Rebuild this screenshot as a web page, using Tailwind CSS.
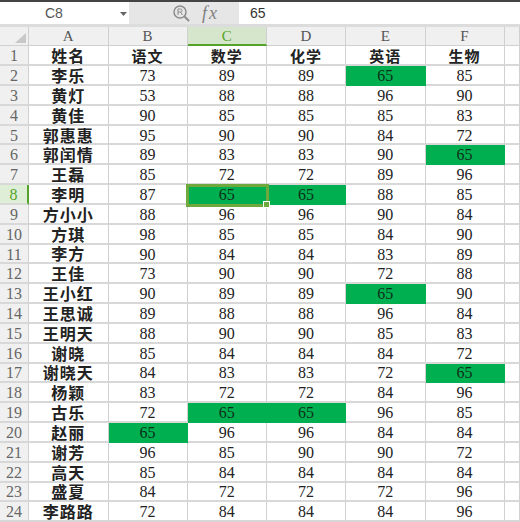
<!DOCTYPE html>
<html lang="zh-CN">
<head>
    <meta charset="UTF-8">
    <title>成绩表</title>
    <script src="https://cdn.jsdelivr.net/npm/@tailwindcss/browser@4"></script>
</head>
<body class="bg-white w-[520px] h-[522px] overflow-hidden font-['Liberation_Serif','Noto_Sans_CJK_SC',serif]">
    <div class="h-[2px] bg-[#444444]"></div>

    <!-- Formula bar -->
    <div class="flex h-[22px]">
        <div class="relative w-[129px] flex items-center bg-white pl-[45px] pt-[1px] text-[14px] text-[#555555] font-['Liberation_Sans',sans-serif]">
            C8
            <svg class="absolute left-[120px] top-[10px]" width="7" height="4" viewBox="0 0 7 4"><path d="M0 0h7L3.5 4z" fill="#666666"/></svg>
        </div>
        <div class="w-[110px] bg-[#e6e6e6] flex items-center pl-[43px] gap-[12px]">
            <svg width="18" height="18" viewBox="0 0 18 18" fill="none" stroke="#8c8c8c">
                <circle cx="8" cy="8" r="6" stroke-width="1.5"/>
                <path d="M12.5 12.5 17 17" stroke-width="2"/>
                <path d="M6 11V5h2.5a1.5 1.5 0 0 1 0 3H6m2.5 0L10.5 11" stroke-width="1"/>
            </svg>
            <span class="text-[18px] italic text-[#808080] tracking-[2px]">fx</span>
        </div>
        <div class="flex-1 flex items-center pl-[11px] pt-[1px] text-[14px] text-[#333333] font-['Liberation_Sans',sans-serif]">65</div>
    </div>
    <div class="h-[3px] bg-[#dcdcdc]"></div>

    <!-- Sheet -->
    <div class="relative">
        <div id="sheet"></div>

        <!-- Selected cell C8 -->
        <div class="absolute left-[186px] top-[157px] w-[83px] h-[23px] border-[3px] border-[#6fa83c]"></div>
        <div class="absolute left-[263px] top-[174px] w-[7px] h-[7px] bg-[#6fa83c] border border-white"></div>
    </div>

    <script>
        const columnCells = ['A', 'B', 'C', 'D', 'E', 'F', ''];
        const rows = [
            ['姓名', '语文', '数学', '化学', '英语', '生物'],
            ['李乐', 73, 89, 89, 65, 85],
            ['黄灯', 53, 88, 88, 96, 90],
            ['黄佳', 90, 85, 85, 85, 83],
            ['郭惠惠', 95, 90, 90, 84, 72],
            ['郭闰情', 89, 83, 83, 90, 65],
            ['王磊', 85, 72, 72, 89, 96],
            ['李明', 87, 65, 65, 88, 85],
            ['方小小', 88, 96, 96, 90, 84],
            ['方琪', 98, 85, 85, 84, 90],
            ['李方', 90, 84, 84, 83, 89],
            ['王佳', 73, 90, 90, 72, 88],
            ['王小红', 90, 89, 89, 65, 90],
            ['王思诚', 89, 88, 88, 96, 84],
            ['王明天', 88, 90, 90, 85, 83],
            ['谢晓', 85, 84, 84, 84, 72],
            ['谢晓天', 84, 83, 83, 72, 65],
            ['杨颖', 83, 72, 72, 84, 96],
            ['古乐', 72, 65, 65, 96, 85],
            ['赵丽', 65, 96, 96, 84, 84],
            ['谢芳', 96, 85, 90, 90, 72],
            ['高天', 85, 84, 84, 84, 84],
            ['盛夏', 84, 72, 72, 72, 96],
            ['李路路', 72, 84, 84, 84, 96]
        ];

        const colWidth = ['w-[79.5px]', 'w-[79px]', 'w-[79.5px]', 'w-[79px]', 'w-[79.5px]', 'w-[79px]', 'flex-1'];

        function headerRow() {
            const cells = columnCells.map((c, i) => {
                const active = c === 'C';
                const cls = active
                    ? 'bg-[#d5e6cc] text-[#55a32a] border-b-2 border-b-[#55a32a]'
                    : 'bg-[#f0f0f0] text-[#555555] border-b border-b-[#d0d0d0]';
                return `<div class="${colWidth[i]} h-full flex items-center justify-center pt-[1px] text-[15px] leading-none border-r border-r-[#d0d0d0] ${cls}">${c}</div>`;
            }).join('');
            return `<div class="flex h-[19.3px]">
                <div class="relative w-[29px] h-full bg-[#f0f0f0] border-r border-r-[#d0d0d0] border-b border-b-[#d0d0d0]">
                    <svg class="absolute left-[15px] top-[6px]" width="11" height="10" viewBox="0 0 11 10"><path d="M11 0v10H0z" fill="#c8c8c8"/></svg>
                </div>${cells}</div>`;
        }

        function dataRow(row, index) {
            const num = index + 1;
            const selected = num === 8;
            const numCls = selected
                ? 'bg-[#dfeed6] text-[#55a32a] border-r-2 border-r-[#55a32a]'
                : 'bg-[#f0f0f0] text-[#666666] border-r border-r-[#d0d0d0]';
            const cells = row.map((value, i) => {
                const isName = i === 0;
                const hit = value === 65 && !isName;
                const type = isName
                    ? "font-bold text-[16px] tracking-[1px] text-[#111111] font-['Noto_Sans_CJK_SC',sans-serif]"
                    : (index === 0 ? "font-bold text-[15px] tracking-[1px] text-[#111111] font-['Noto_Sans_CJK_SC',sans-serif]" : 'text-[16px] pt-[2px]');
                const fill = hit
                    ? 'bg-[#00b050] text-[#0c2f18] border-r-[#00b050] border-b-[#00b050]'
                    : 'text-[#222222] border-r-[#d0d0d0] border-b-[#d8d8d8]';
                return `<div class="${colWidth[i]} h-full flex items-center justify-center leading-none border-r border-b-2 ${type} ${fill}">${value}</div>`;
            }).join('');
            return `<div class="flex h-[19.83px]">
                <div class="w-[29px] h-full flex items-center justify-center pt-[2px] text-[16px] leading-none border-b-2 border-b-[#d8d8d8] ${numCls}">${num}</div>
                ${cells}
                <div class="flex-1 h-full border-r border-b-2 border-r-[#d0d0d0] border-b-[#d8d8d8]"></div>
            </div>`;
        }

        document.getElementById('sheet').innerHTML = headerRow() + rows.map(dataRow).join('');
    </script>
</body>
</html>
